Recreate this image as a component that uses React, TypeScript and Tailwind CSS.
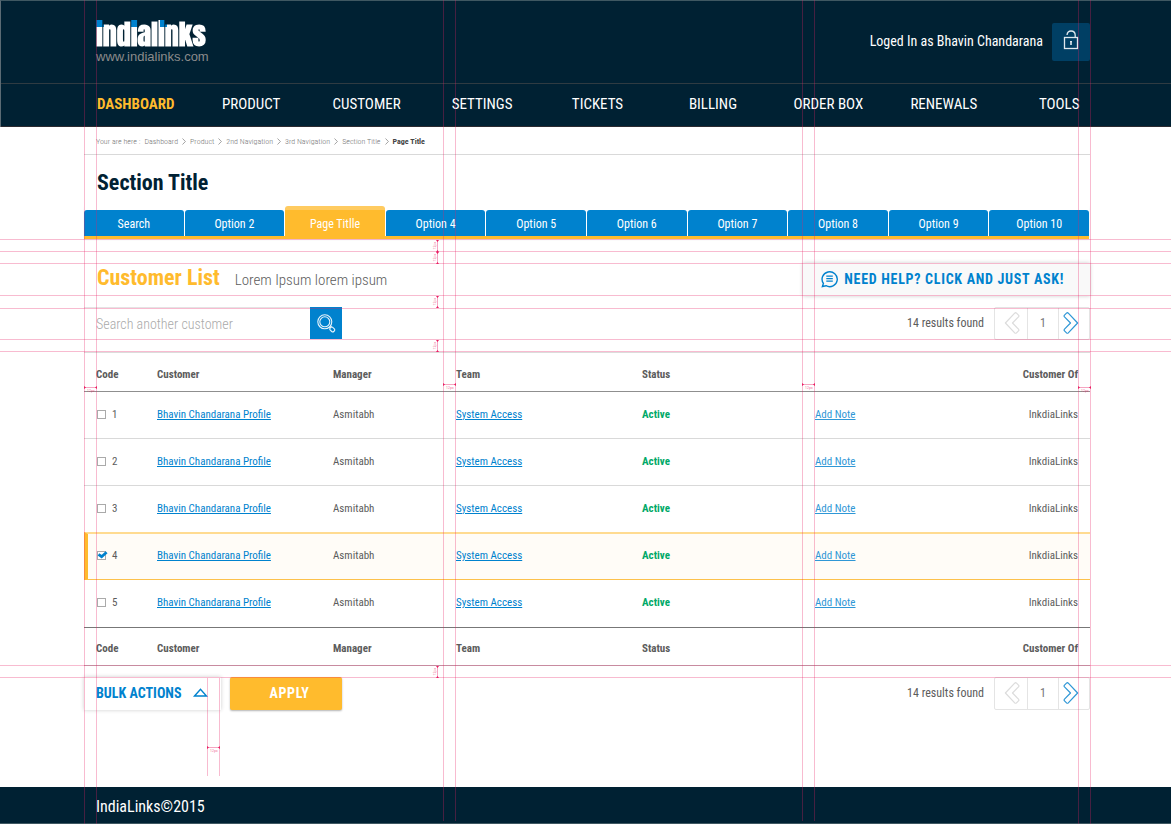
import type { ReactNode } from 'react';

const navItems = ['DASHBOARD', 'PRODUCT', 'CUSTOMER', 'SETTINGS', 'TICKETS', 'BILLING', 'ORDER BOX', 'RENEWALS', 'TOOLS'];
const crumbs = ['Dashboard', 'Product', '2nd Navigation', '3rd Navigation', 'Section Title'];
const tabs = ['Search', 'Option 2', 'Page Titlle', 'Option 4', 'Option 5', 'Option 6', 'Option 7', 'Option 8', 'Option 9', 'Option 10'];
const rows = [1, 2, 3, 4, 5];

function LockIcon() {
  return (
    <svg width="16" height="20" viewBox="0 0 16 20" fill="none" stroke="#dfe8ee" strokeWidth="1.3" aria-hidden="true">
      <rect x="1.5" y="7.500" width="13" height="11" />
      <path d="M4 5C4.300 2.500 5.800 1 8 1C10.500 1 12.200 2.700 12.200 5.200V7.500" />
      <path d="M8 11V15" strokeWidth="1.600" />
      <path d="M7 11.600H9" strokeWidth="1.300" />
    </svg>
  );
}

function SearchIcon() {
  return (
    <svg width="20" height="20" viewBox="0 0 20 20" fill="none" stroke="#e6f3fb" strokeWidth="1.100" aria-hidden="true">
      <circle cx="8.800" cy="8.800" r="7" />
      <circle cx="8.800" cy="8.800" r="5" />
      <path d="M13.300 14L14.600 15.200M14.300 12.900L15.700 14.100" />
      <path d="M13.900 16.700C13.300 15.500 15.100 13.500 16.500 14.200L18.300 15.900C19.600 17.400 17.200 19.800 15.700 18.500Z" />
    </svg>
  );
}

function ChatIcon() {
  return (
    <svg width="18" height="18" viewBox="0 0 18 18" fill="none" stroke="#0082ce" strokeWidth="1.400" aria-hidden="true">
      <path d="M2.400 13.400A7.600 7.400 0 1 1 5 15.700L1.400 16.500Z" />
      <path d="M5.300 6.200H11.800M5.300 8.700H11.800M5.300 11.200H11.800" strokeWidth="1.300" />
    </svg>
  );
}

function ChevronOutline({ flip = false }: { flip?: boolean }) {
  return (
    <svg
      width="16"
      height="24"
      viewBox="0 0 16 24"
      fill="none"
      stroke="currentColor"
      strokeWidth="1.200"
      strokeLinejoin="round"
      aria-hidden="true"
    >
      <path
        d={
          flip
            ? 'M14.600 12L5.300 2.200Q4.400 1.300 3.500 2.200L1.500 4.200Q0.700 5 1.500 5.900L7.500 12L1.500 18.100Q0.700 19 1.500 19.800L3.500 21.800Q4.400 22.700 5.300 21.800Z'
            : 'M1.400 12L10.700 2.200Q11.600 1.300 12.500 2.200L14.500 4.200Q15.300 5 14.500 5.900L8.500 12L14.500 18.100Q15.300 19 14.500 19.800L12.500 21.800Q11.600 22.700 10.700 21.800Z'
        }
      />
    </svg>
  );
}

function CrumbArrow() {
  return (
    <svg width="4" height="7" viewBox="0 0 4 7" fill="none" stroke="#8a8a8a" strokeWidth="0.800" aria-hidden="true">
      <path d="M0.500 0.500L3.400 3.500L0.500 6.500" />
    </svg>
  );
}

function Pager() {
  return (
    <div className="flex items-center gap-2.5">
      <span className="pb-0.5 text-xs text-[#5c5c5c]">14 results found</span>
      <div className="flex h-[33px] rounded-xs border border-[#e4e4e4]">
        <button aria-label="Previous page" className="flex w-8 items-center justify-center pb-px pl-0.5 text-[#dcdcdc]">
          <ChevronOutline />
        </button>
        <span className="flex w-8 items-center justify-center border-x border-[#e4e4e4] pb-0.5 text-xs text-[#777]">1</span>
        <button aria-label="Next page" className="flex w-[30px] items-center justify-center pr-1.5 pb-px text-[#2f97d6]">
          <ChevronOutline flip />
        </button>
      </div>
    </div>
  );
}

function RowCheckbox({ id, checked }: { id: number; checked: boolean }) {
  return (
    <label className="flex items-center gap-1.5">
      <span className="relative mb-0.5 flex">
        <input
          type="checkbox"
          name={`row-${id}`}
          defaultChecked={checked}
          className="peer size-[9px] appearance-none border border-[#aaa] bg-white"
        />
        <svg
          className="pointer-events-none absolute top-0 left-0 hidden peer-checked:block"
          width="11"
          height="9"
          viewBox="0 0 11 9"
          fill="none"
          aria-hidden="true"
        >
          <path d="M1.500 3.400L4.600 5.700L9.600 1.200" stroke="#0082ce" strokeWidth="2.800" />
        </svg>
      </span>
      {id}
    </label>
  );
}

function HeadCells() {
  return (
    <>
      <th className="pl-3">Code</th>
      <th>Customer</th>
      <th>Manager</th>
      <th>Team</th>
      <th>Status</th>
      <td />
      <th className="pr-3 text-right">Customer Of</th>
    </>
  );
}

function Guide({ className }: { className: string }) {
  return <div className={`absolute bg-[#e91e63]/30 ${className}`} />;
}

function VerticalMeasure({ className }: { className: string }) {
  return (
    <svg className={`absolute left-[431px] ${className}`} width="9" height="12" viewBox="0 0 9 12" aria-hidden="true">
      <path d="M6.500 0V12" stroke="#e91e63" strokeOpacity="0.400" strokeWidth="1" />
      <path d="M5 0H8L6.500 2ZM5 12H8L6.500 10Z" fill="#e91e63" />
      <text x="-9.500" y="4.500" transform="rotate(-90)" fontSize="4" fill="#e91e63" fillOpacity="0.700">12px</text>
    </svg>
  );
}

function HorizontalMeasure({ className }: { className: string }) {
  return (
    <svg className={`absolute ${className}`} width="13" height="8" viewBox="0 0 13 8" aria-hidden="true">
      <path d="M0 2.500H13" stroke="#e91e63" strokeOpacity="0.400" strokeWidth="1" />
      <path d="M0 1V4L2 2.500ZM13 1V4L11 2.500Z" fill="#e91e63" />
      <text x="3" y="7" fontSize="4" fill="#e91e63" fillOpacity="0.700">12px</text>
    </svg>
  );
}

function Redlines() {
  return (
    <div className="pointer-events-none absolute inset-0 overflow-hidden">
      <Guide className="inset-y-0 left-[84px] w-px" />
      <Guide className="inset-y-0 left-[96px] w-px" />
      <Guide className="top-0 bottom-[3px] left-[443px] w-px" />
      <Guide className="top-0 bottom-[3px] left-[455px] w-px" />
      <Guide className="top-0 right-[368px] bottom-[3px] w-px" />
      <Guide className="top-0 right-[356px] bottom-[3px] w-px" />
      <Guide className="inset-y-0 right-[92px] w-px" />
      <Guide className="inset-y-0 right-[80px] w-px" />
      <Guide className="inset-x-0 top-[239px] h-px" />
      <Guide className="inset-x-0 top-[251px] h-px" />
      <Guide className="inset-x-0 top-[263px] h-px" />
      <Guide className="inset-x-0 top-[295px] h-px" />
      <Guide className="inset-x-0 top-[308px] h-px" />
      <Guide className="inset-x-0 top-[339px] h-px" />
      <Guide className="inset-x-0 top-[351px] h-px" />
      <Guide className="inset-x-0 top-[665px] h-px" />
      <Guide className="inset-x-0 top-[677px] h-px" />
      <Guide className="top-[678px] left-[207px] h-[98px] w-px" />
      <Guide className="top-[678px] left-[219px] h-[98px] w-px" />
      <VerticalMeasure className="top-[240px]" />
      <VerticalMeasure className="top-[252px]" />
      <VerticalMeasure className="top-[296px]" />
      <VerticalMeasure className="top-[340px]" />
      <VerticalMeasure className="top-[666px]" />
      <HorizontalMeasure className="top-[385px] left-[84px]" />
      <HorizontalMeasure className="top-[382px] left-[443px]" />
      <HorizontalMeasure className="top-[382px] right-[356px]" />
      <HorizontalMeasure className="top-[385px] right-[80px]" />
      <HorizontalMeasure className="top-[745px] left-[207px]" />
    </div>
  );
}

function Content({ children }: { children: ReactNode }) {
  return <div className="pr-[81px] pl-[84px]">{children}</div>;
}

export default function App() {
  return (
    <div className="relative flex min-h-screen flex-col bg-white font-['Roboto_Condensed','Roboto',sans-serif] text-[#5c5c5c]">
      <header className="border-t border-l border-t-[#3f5862] border-l-[#5b6b74] bg-[#002133]">
        <div className="flex h-[82px] items-center justify-between pr-[81px] pl-[95px]">
          <a href="#home" className="flex flex-col items-start">
            <span className="bg-white bg-[linear-gradient(to_right,#0082ce_8px,white_8px_35px,#0082ce_35px_42px,white_42px_64px,#0082ce_64px_71px,white_71px)] bg-[length:100%_7px] bg-clip-text bg-no-repeat font-['Anton','Roboto_Condensed',sans-serif] text-[28px] leading-7 font-bold text-transparent">
              indialinks
            </span>
            <span className="pt-0.5 font-['Liberation_Sans',sans-serif] text-[13px] leading-[14px] text-[#8b8b8b]">www.indialinks.com</span>
          </a>
          <div className="flex items-center gap-[9px]">
            <span className="pb-0.5 text-sm text-white">Loged In as Bhavin Chandarana</span>
            <button aria-label="Log out" className="flex size-[38px] items-center justify-center rounded-xs bg-[#003f64] pb-1">
              <LockIcon />
            </button>
          </div>
        </div>
        <nav className="grid h-11 grid-cols-9 items-center border-y border-t-[#2f3b42] border-b-[#2b2a30] pr-[54px] pb-0.5 pl-[77px] text-center text-[15px]">
          {navItems.map((item, i) => (
            <a key={item} href="#nav" className={i === 0 ? 'font-bold text-[#ffbb2d]' : 'text-white'}>
              {item}
            </a>
          ))}
        </nav>
      </header>

      <main className="flex-1">
        <Content>
          <nav aria-label="Breadcrumb" className="flex h-7 items-center gap-1 border-b border-[#d9d9d9] pt-0.5 pl-3 text-[8px] text-[#777]">
            <span className="font-light">Your are here :</span>
            {crumbs.map((crumb) => (
              <span key={crumb} className="flex items-center gap-1 font-light">
                <a href="#crumb">{crumb}</a>
                <CrumbArrow />
              </span>
            ))}
            <span className="font-bold text-[#444]">Page Title</span>
          </nav>

          <h1 className="px-[13px] pt-3 pb-[7px] text-[22px] leading-8 font-bold text-[#002133]">Section Title</h1>

          <div className="mr-px grid grid-cols-10 items-end gap-x-px border-b-3 border-[#ffbb2d] text-center text-xs text-white shadow-xs">
            {tabs.map((tab, i) => (
              <a
                key={tab}
                href="#tab"
                className={
                  i === 2
                    ? 'rounded-t-[3px] border-t-4 border-[#ffcb60] bg-[#ffbb2d] pt-1.5 pb-1 leading-4'
                    : 'rounded-t-[3px] bg-[#0082ce] pt-1.5 pb-1 leading-4'
                }
              >
                {tab}
              </a>
            ))}
          </div>

          <div className="mt-[23px] flex items-start justify-between pl-[13px]">
            <div className="flex items-baseline gap-[15px]">
              <h2 className="text-[22px] leading-8 font-bold text-[#ffbb2d]">Customer List</h2>
              <p className="text-[15px] font-light">Lorem Ipsum lorem ipsum</p>
            </div>
            <button className="mt-px flex h-[33px] items-center gap-[5px] bg-[#f9f9f9] pr-[26px] pb-0.5 pl-[18px] text-sm font-bold tracking-wider text-[#0082ce] shadow-[0_0_4px_rgba(0,0,0,0.2)]">
              <ChatIcon />
              NEED HELP? CLICK AND JUST ASK!
            </button>
          </div>

          <div className="mt-[11px] flex items-start justify-between">
            <form className="flex" onSubmit={(e) => e.preventDefault()}>
              <input
                type="search"
                aria-label="Search another customer"
                placeholder="Search another customer"
                className="h-8 w-[226px] border-t border-[#e4e4e4] px-3 text-sm font-light outline-none placeholder:text-[#aaa]"
              />
              <button aria-label="Search" className="flex size-8 items-center justify-center bg-[#0082ce]">
                <SearchIcon />
              </button>
            </form>
            <Pager />
          </div>

          <table className="mt-3 w-full table-fixed border-separate border-spacing-0 text-left text-[11px]">
            <colgroup>
              <col className="w-[73px]" />
              <col className="w-[176px]" />
              <col className="w-[123px]" />
              <col className="w-[186px]" />
              <col className="w-[173px]" />
              <col className="w-[100px]" />
              <col />
            </colgroup>
            <thead>
              <tr className="h-10 *:border-t *:border-b *:border-t-[#dcdcdc] *:border-b-[#8f8f8f] *:pt-1.5">
                <HeadCells />
              </tr>
            </thead>
            <tbody>
              {rows.map((id) => (
                <tr
                  key={id}
                  className={
                    id === 4
                      ? 'h-12 bg-[#fffcf7] *:border-t-2 *:border-b *:border-t-[#ffdb91] *:border-b-[#fdc14b]'
                      : id === 3
                        ? 'h-[46px]'
                        : id === 5
                          ? 'h-12 *:border-b *:border-[#777]'
                          : 'h-[47px] *:border-b *:border-[#d9d9d9]'
                  }
                >
                  <td className={id === 4 ? 'border-l-4 border-l-[#ffbb2d] pl-[9px]' : 'pl-[13px]'}>
                    <RowCheckbox id={id} checked={id === 4} />
                  </td>
                  <td>
                    <a href="#profile" className="text-[#0082ce] underline">Bhavin Chandarana Profile</a>
                  </td>
                  <td>Asmitabh</td>
                  <td>
                    <a href="#access" className="text-[#0082ce] underline">System Access</a>
                  </td>
                  <td className="font-bold text-[#00a968]">Active</td>
                  <td>
                    <a href="#note" className="text-[#2f97d6] underline">Add Note</a>
                  </td>
                  <td className="pr-3 text-right">InkdiaLinks</td>
                </tr>
              ))}
            </tbody>
            <tfoot>
              <tr className="h-[38px] *:border-b *:border-[#bbb] *:pt-1.5">
                <HeadCells />
              </tr>
            </tfoot>
          </table>

          <div className="mt-[11px] mb-[76px] flex items-start justify-between">
            <div className="flex gap-[9px]">
              <button className="flex h-[33px] items-center gap-3 pr-[13px] pb-0.5 pl-3 text-sm font-bold text-[#0082ce] shadow-[0_0_4px_rgba(0,0,0,0.2)]">
                BULK ACTIONS
                <svg width="15" height="9" viewBox="0 0 15 9" fill="none" stroke="#0082ce" strokeWidth="1.400" aria-hidden="true">
                  <path d="M1.500 8L7.500 1.200L13.500 8Z" />
                </svg>
              </button>
              <button className="h-[33px] w-28 rounded-xs bg-[#ffbb2d] pb-0.5 pl-1.5 text-sm font-bold tracking-wider text-white shadow-[0_1px_2px_rgba(0,0,0,0.3)]">
                APPLY
              </button>
            </div>
            <Pager />
          </div>
        </Content>
      </main>

      <footer className="flex h-[37px] items-center border-b border-[#3f5862] bg-[#002133] pt-1 pl-24 text-base text-white">
        IndiaLinks©2015
      </footer>

      <Redlines />
    </div>
  );
}
